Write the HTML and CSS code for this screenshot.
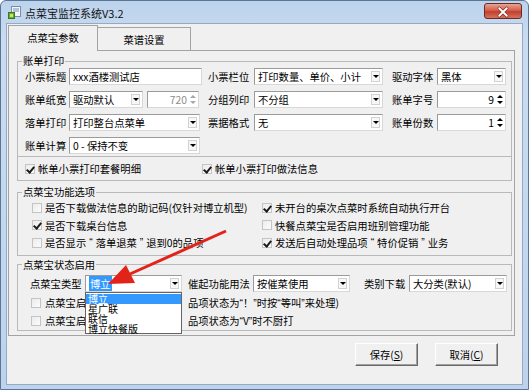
FILE: index.html
```html
<!DOCTYPE html>
<html lang="zh-CN">
<head>
    <meta charset="UTF-8">
    <title>点菜宝监控系统V3.2</title>
    <link rel="stylesheet" href="styles.css">
</head>
<body>

    <div class="window">
        <!-- Title bar -->
        <div class="titlebar">
            <svg class="app-icon" width="13" height="13" viewBox="0 0 13 13">
                <rect x="3.5" y="0.5" width="9" height="10" fill="#f3f5f7" stroke="#7d8ea5"/>
                <rect x="5" y="2.5" width="6" height="1" fill="#6f8fc4"/>
                <rect x="5" y="4.5" width="6" height="1" fill="#6f8fc4"/>
                <rect x="0.5" y="6.5" width="6" height="6" fill="#58b23f" stroke="#2f7d22"/>
                <rect x="2" y="8" width="3" height="3" fill="#f2d54a"/>
            </svg>
            <span class="title">点菜宝监控系统V3.2</span>
            <span class="close">
                <svg width="38" height="16" viewBox="0 0 38 16">
                    <path d="M15 4 L23 12 M23 4 L15 12" stroke="#7a2a20" stroke-width="3.4" stroke-linecap="round"/>
                    <path d="M15 4 L23 12 M23 4 L15 12" stroke="#fff" stroke-width="2" stroke-linecap="round"/>
                </svg>
            </span>
        </div>

        <div class="client">
            <!-- Tabs -->
            <div class="tabs">
                <div class="tab active">点菜宝参数</div>
                <div class="tab">菜谱设置</div>
            </div>

            <div class="page">
                <!-- 账单打印 -->
                <fieldset class="group bill">
                    <legend>账单打印</legend>
                    <div class="form-grid">
                        <span class="lbl">小票标题</span>
                        <div class="edit">xxx酒楼测试店</div>
                        <span class="lbl mid">小票栏位</span>
                        <div class="select"><span class="val">打印数量、单价、小计</span><span class="drop"></span></div>
                        <span class="lbl end">驱动字体</span>
                        <div class="select"><span class="val">黑体</span><span class="drop"></span></div>

                        <span class="lbl">账单纸宽</span>
                        <div class="pair">
                            <div class="select paper"><span class="val">驱动默认</span><span class="drop"></span></div>
                            <div class="spin disabled"><span class="val">720</span><span class="updown"></span></div>
                        </div>
                        <span class="lbl mid">分组列印</span>
                        <div class="select"><span class="val">不分组</span><span class="drop"></span></div>
                        <span class="lbl end">账单字号</span>
                        <div class="spin"><span class="val">9</span><span class="updown"></span></div>

                        <span class="lbl">落单打印</span>
                        <div class="select short"><span class="val">打印整台点菜单</span><span class="drop"></span></div>
                        <span class="lbl mid">票据格式</span>
                        <div class="select"><span class="val">无</span><span class="drop"></span></div>
                        <span class="lbl end">账单份数</span>
                        <div class="spin"><span class="val">1</span><span class="updown"></span></div>

                        <span class="lbl">账单计算</span>
                        <div class="select short"><span class="val">0 - 保持不变</span><span class="drop"></span></div>
                    </div>
                    <div class="strip">
                        <label class="chk wide"><span class="box checked"></span>帐单小票打印套餐明细</label>
                        <label class="chk"><span class="box checked"></span>帐单小票打印做法信息</label>
                    </div>
                </fieldset>

                <!-- 点菜宝功能选项 -->
                <fieldset class="group func">
                    <legend>点菜宝功能选项</legend>
                    <div class="opts">
                        <label class="chk"><span class="box"></span>是否下载做法信息的助记码(仅针对博立机型)</label>
                        <label class="chk"><span class="box checked"></span>未开台的桌次点菜时系统自动执行开台</label>
                        <label class="chk"><span class="box checked"></span>是否下载桌台信息</label>
                        <label class="chk"><span class="box"></span>快餐点菜宝是否启用班别管理功能</label>
                        <label class="chk"><span class="box"></span>是否显示<span class="q">“</span>落单退菜<span class="q">”</span> 退到0的品项</label>
                        <label class="chk"><span class="box checked"></span>发送后自动处理品项<span class="q">“</span>特价促销<span class="q">”</span>业务</label>
                    </div>
                </fieldset>

                <!-- 点菜宝状态启用 -->
                <fieldset class="group state">
                    <legend>点菜宝状态启用</legend>
                    <div class="state-row">
                        <span class="lbl">点菜宝类型</span>
                        <div class="select open">
                            <span class="val"><span class="hl">博立</span></span><span class="drop"></span>
                            <ul class="dropdown">
                                <li class="sel">博立</li>
                                <li>星广联</li>
                                <li>联信</li>
                                <li>博立快餐版</li>
                            </ul>
                        </div>
                        <span class="lbl mid">催起功能用法</span>
                        <div class="select"><span class="val">按催菜使用</span><span class="drop"></span></div>
                        <span class="lbl far">类别下载</span>
                        <div class="select"><span class="val">大分类(默认)</span><span class="drop"></span></div>
                    </div>
                    <div class="state-checks">
                        <label class="chk"><span class="box"></span>点菜宝启</label>
                        <span class="note">品项状态为<span class="q">“</span>！<span class="q">”</span>时按<span class="q">“</span>等叫<span class="q">”</span>来处理)</span>
                        <label class="chk"><span class="box"></span>点菜宝启</label>
                        <span class="note">品项状态为<span class="q">“</span>V<span class="q">”</span>时不厨打</span>
                    </div>
                </fieldset>
            </div>

            <div class="actions">
                <button class="btn">保存(<u>S</u>)</button>
                <button class="btn">取消(<u>C</u>)</button>
            </div>
        </div>

        <!-- red annotation arrow -->
        <svg class="arrow" width="529" height="390" viewBox="0 0 529 390">
            <line x1="226" y1="231" x2="130" y2="274" stroke="#e2231a" stroke-width="3"/>
            <polygon points="108,284 135,283 126,265" fill="#e2231a"/>
        </svg>
    </div>

</body>
</html>
```

FILE: styles.css
```css
* {
    margin: 0;
    padding: 0;
    box-sizing: border-box;
}

body {
    width: 529px;
    height: 390px;
    overflow: hidden;
    background: #ffffff;
    font-family: "Noto Sans CJK SC", "Liberation Sans", sans-serif;
    font-size: 10.3px;
    color: #000;
}

/* Window frame */
.window {
    position: relative;
    width: 529px;
    height: 390px;
    display: flex;
    flex-direction: column;
    background: linear-gradient(to bottom, #bcd3ec, #c9dcf1 40px, #bed3eb);
    border: 1px solid #5a7596;
    border-radius: 6px 6px 0 0;
}

.titlebar {
    height: 23px;
    display: flex;
    align-items: center;
    padding-left: 7px;
}

.app-icon {
    flex: none;
}

.title {
    margin-left: 4px;
    font-size: 11px;
    color: #111;
}

.close {
    margin-left: auto;
    margin-right: 6px;
    align-self: flex-start;
    margin-top: 2px;
    width: 38px;
    height: 16px;
    border: 1px solid #6b2a22;
    border-radius: 3px;
    background: linear-gradient(to bottom, #e8a393, #d4604c 45%, #c2402c 55%, #d5725c);
    display: flex;
}

/* Client area */
.client {
    flex: 1;
    margin: 0 6px 5px 6px;
    background: #f0f0f0;
    outline: 1px solid #93aac6;
    display: flex;
    flex-direction: column;
}

.tabs {
    height: 26px;
    display: flex;
    align-items: flex-end;
    padding-left: 1px;
}

.tab {
    height: 23px;
    width: 93px;
    border: 1px solid #a3a3a3;
    border-left: none;
    border-bottom: none;
    background: #f0f0f0;
    display: flex;
    align-items: center;
    justify-content: center;
    font-size: 10.3px;
}

.tab.active {
    width: 90px;
    height: 26px;
    border-left: 1px solid #a3a3a3;
    margin-bottom: -1px;
    position: relative;
    z-index: 1;
    padding-bottom: 2px;
}

.page {
    margin: 0 7px 0 1px;
    border: 1px solid #a3a3a3;
    padding: 4px 2px 4px 8px;
    display: flex;
    flex-direction: column;
}

/* Group boxes */
.group {
    border: 1px solid #b9b9b9;
    min-width: 0;
    padding: 0;
}

.group legend {
    margin-left: 4px;
    padding: 0 1px;
    line-height: 12px;
}

.func {
    margin-top: 5px;
}

.state {
    margin-top: 3px;
}

.lbl {
    white-space: nowrap;
    line-height: 17px;
}

.lbl.mid {
    padding-left: 6px;
}

.lbl.end {
    padding-left: 9px;
}

.lbl.far {
    padding-left: 14px;
}

/* narrow western quotes, as the dialog font draws them */
.q {
    font-family: "Liberation Sans", sans-serif;
}

/* 账单打印 */
.form-grid {
    display: grid;
    grid-template-columns: 44px 133px 52px 129px 54px 69px;
    grid-auto-rows: 17px;
    row-gap: 6px;
    margin: 1px 0 0 7px;
    align-items: center;
}

.strip {
    height: 24px;
    margin-top: 2px;
    border-top: 1px solid #b9b9b9;
    padding-left: 7px;
    display: flex;
    align-items: center;
}

.chk.wide {
    width: 177px;
}

/* Edit / combo / spin controls */
.edit,
.select,
.spin {
    height: 17px;
    background: #fff;
    border: 1px solid;
    border-color: #9a9a9a #d8d8d8 #d8d8d8 #9a9a9a;
    display: flex;
    align-items: center;
    white-space: nowrap;
}

.edit {
    padding-left: 3px;
}

.select .val {
    flex: 1;
    padding-left: 3px;
    overflow: hidden;
}

.select .drop {
    width: 9px;
    height: 11px;
    margin-right: 2px;
    border: 1px solid #d2d2d2;
    background: #f7f7f7;
    display: flex;
    align-items: center;
    justify-content: center;
}

.select .drop::after {
    content: "";
    border-top: 3px solid #000;
    border-left: 3px solid transparent;
    border-right: 3px solid transparent;
}

.select.short {
    width: 131px;
}

.pair {
    display: flex;
    gap: 4px;
}

.select.paper {
    width: 74px;
}

.spin.disabled {
    width: 52px;
    color: #8c8c8c;
}

.spin .val {
    flex: 1;
    text-align: right;
    padding-right: 2px;
}

.spin .updown {
    width: 8px;
    height: 13px;
    margin-right: 1px;
    display: flex;
    flex-direction: column;
    align-items: center;
    justify-content: space-around;
}

.spin .updown::before {
    content: "";
    border-bottom: 3px solid #000;
    border-left: 3px solid transparent;
    border-right: 3px solid transparent;
}

.spin .updown::after {
    content: "";
    border-top: 3px solid #000;
    border-left: 3px solid transparent;
    border-right: 3px solid transparent;
}

.spin.disabled .updown::before {
    border-bottom-color: #a8a8a8;
}

.spin.disabled .updown::after {
    border-top-color: #a8a8a8;
}

/* Check boxes */
.chk {
    display: flex;
    align-items: center;
    gap: 3px;
    white-space: nowrap;
}

.box {
    flex: none;
    width: 10px;
    height: 10px;
    border: 1px solid #c4c4c4;
    background: linear-gradient(135deg, #ececec, #fbfbfb);
    position: relative;
}

.box.checked::after {
    content: "";
    position: absolute;
    left: 2px;
    top: 0px;
    width: 3px;
    height: 6px;
    border-right: 2px solid #1c1c1c;
    border-bottom: 2px solid #1c1c1c;
    transform: rotate(40deg);
}

/* 点菜宝功能选项 */
.opts {
    display: grid;
    grid-template-columns: 230px 1fr;
    grid-auto-rows: 17.5px;
    margin: 1px 0 3px 14px;
}

/* 点菜宝状态启用 */
.state-row {
    display: grid;
    grid-template-columns: 55px 97px 71px 97px 59px 98px;
    grid-auto-rows: 17px;
    margin: 4px 0 0 12px;
    align-items: center;
}

.state-checks {
    display: grid;
    grid-template-columns: 158px 1fr;
    grid-auto-rows: 18px;
    margin: 2px 0 0 12px;
    align-items: center;
}

.state-checks .chk {
    margin-left: 1px;
    gap: 4px;
}

.note {
    white-space: nowrap;
}

.select.open {
    position: relative;
}

.hl {
    background: #3399ff;
    color: #fff;
    padding: 0 1px;
}

/* Open combo list */
.dropdown {
    position: absolute;
    left: -1px;
    top: calc(100% + 1px);
    width: 97px;
    height: 42px;
    list-style: none;
    background: #fff;
    border: 1px solid #646464;
    z-index: 5;
    padding-top: 1px;
    font-size: 10px;
}

.dropdown li {
    height: 10px;
    line-height: 10px;
    padding-left: 2px;
}

.dropdown li.sel {
    background: #3399ff;
    color: #fff;
}

/* Buttons */
.actions {
    display: flex;
    justify-content: flex-end;
    gap: 17px;
    padding: 7px 24px 0 0;
}

.btn {
    width: 63px;
    height: 23px;
    font-family: inherit;
    font-size: 10.3px;
    background: #f0f0f0;
    border: 1px solid;
    border-color: #fff #6a6a6a #6a6a6a #fff;
    box-shadow: inset -1px -1px #a0a0a0;
}

.btn u {
    text-decoration: underline;
}

/* Annotation arrow drawn over the dialog */
.arrow {
    position: absolute;
    left: -1px;
    top: -1px;
    pointer-events: none;
    z-index: 10;
}
```
